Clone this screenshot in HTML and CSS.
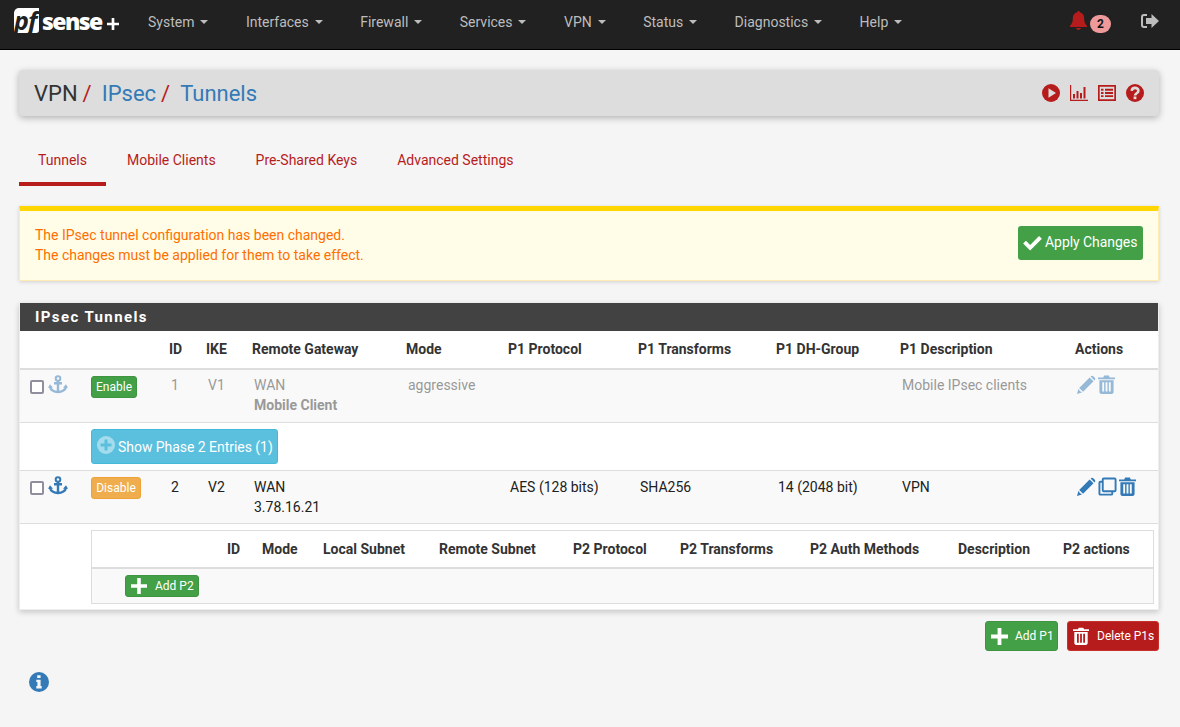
FILE: index.html
```html
<!DOCTYPE html>
<html lang="en">
<head>
<meta charset="utf-8">
<title>VPN / IPsec / Tunnels</title>
<link rel="stylesheet" href="styles.css">
</head>
<body>
<svg class="defs" width="0" height="0" aria-hidden="true">
  <symbol id="i-anchor" viewBox="0 0 20 20"><path fill="none" stroke="currentColor" stroke-width="2.400" d="M10 6v11M6 8.200h8M2 11.500c.5 3.500 4 5.500 8 5.500s7.500-2 8-5.500"/><circle cx="10" cy="3.500" r="2.300" fill="none" stroke="currentColor" stroke-width="2"/><path fill="currentColor" d="M0 12.800 2 9.300l3 3.500zM20 12.800l-2-3.500-3 3.500z"/></symbol>
  <symbol id="i-pencil" viewBox="0 0 20 20"><path fill="currentColor" d="M13.300 2.600 17.400 6.700 6.400 17.700 2.300 13.600zM14.400 1.500c1-1 2-1 3 0l1.100 1.100c1 1 1 2 0 3l-.1.100-4.100-4.100zM1.500 14.800l3.700 3.700-5.200 1.500z"/><path fill="#fff" opacity=".75" d="M2.800 15.200l2 2-1 .3-1.300-1.300z"/></symbol>
  <symbol id="i-trash" viewBox="0 0 18 20"><path fill="currentColor" d="M0 2.500h5.500L6.500.6h5l1 1.900H18v2H0zM1.500 5.500h15V18c0 1.200-.8 2-2 2h-11c-1.200 0-2-.8-2-2zM4.500 7.500V17.500h2V7.500zM8 7.500V17.500h2V7.500zM11.500 7.500V17.500h2V7.500z" fill-rule="evenodd"/></symbol>
  <symbol id="i-copy" viewBox="0 0 20 20"><path fill="none" stroke="currentColor" stroke-width="2" d="M6 1.500h11.500a1 1 0 0 1 1 1V14a1 1 0 0 1-1 1H6a1 1 0 0 1-1-1V2.500a1 1 0 0 1 1-1z"/><path fill="none" stroke="currentColor" stroke-width="2" d="M5 5H2.500a1 1 0 0 0-1 1v11.500a1 1 0 0 0 1 1H14a1 1 0 0 0 1-1V15"/></symbol>
  <symbol id="i-plus" viewBox="0 0 18 18"><path fill="currentColor" d="M7 0h4v7h7v4h-7v7H7v-7H0V7h7z"/></symbol>
</svg>

<header class="navbar">
  <a class="brand" href="#"><span class="pf">pf</span><span class="sense">sense</span><svg class="brand-plus"><use href="#i-plus"/></svg></a>
  <nav class="menu">
    <a class="menu-item" href="#">System<i class="caret"></i></a>
    <a class="menu-item" href="#">Interfaces<i class="caret"></i></a>
    <a class="menu-item" href="#">Firewall<i class="caret"></i></a>
    <a class="menu-item" href="#">Services<i class="caret"></i></a>
    <a class="menu-item" href="#">VPN<i class="caret"></i></a>
    <a class="menu-item" href="#">Status<i class="caret"></i></a>
    <a class="menu-item" href="#">Diagnostics<i class="caret"></i></a>
    <a class="menu-item" href="#">Help<i class="caret"></i></a>
  </nav>
  <div class="nav-right">
    <svg class="bell" viewBox="0 0 18 20"><path fill="currentColor" d="M9 0c.8 0 1.300.6 1.300 1.300 3 .6 4.700 3 4.700 6 0 4.500 1 6 3 8.200V17H0v-1.500c2-2.200 3-3.700 3-8.200 0-3 1.700-5.400 4.700-6C7.700.6 8.200 0 9 0zM6.500 18h5c0 1.200-1.100 2-2.500 2s-2.500-.8-2.500-2z"/></svg>
    <span class="badge">2</span>
    <svg class="signout" viewBox="0 0 18 16"><path fill="none" stroke="currentColor" stroke-width="2" d="M6 2H3a2 2 0 0 0-2 2v8a2 2 0 0 0 2 2h3"/><path fill="currentColor" d="M5 5h5.500V1l7.500 7-7.500 7v-4H5z"/></svg>
  </div>
</header>

<main class="page">
  <section class="crumbs">
    <h1 class="crumb-title">VPN<span class="sep">/</span><a href="#">IPsec</a><span class="sep">/</span><a href="#">Tunnels</a></h1>
    <div class="crumb-icons">
      <svg viewBox="0 0 18 18"><circle cx="9" cy="9" r="9" fill="currentColor"/><path fill="#ddd" d="M6.500 4.300v9.400l7.500-4.700z"/></svg>
      <svg viewBox="0 0 18 18"><path fill="currentColor" d="M0 1h1.200v14.800H18V17H0zM3 10h2v4.500H3zM6.500 7h2v7.500h-2zM10 9h2v5.500h-2zM13.500 3h2v11.500h-2z"/></svg>
      <svg viewBox="0 0 18 18"><path fill="none" stroke="currentColor" stroke-width="1.700" d="M.85 1.850h16.300v14.300H.85z"/><path fill="currentColor" d="M3 4.800h2.500v1.900H3zM7 4.800h8v1.900H7zM3 8h2.500v1.900H3zM7 8h8v1.900H7zM3 11.200h2.500v1.900H3zM7 11.200h8v1.900H7z"/></svg>
      <svg viewBox="0 0 18 18"><circle cx="9" cy="9" r="9" fill="currentColor"/><path fill="none" stroke="#ddd" stroke-width="2.600" d="M5.700 6.900c.2-2 1.500-3 3.300-3s3.400 1 3.400 2.800c0 2.600-3.400 2.400-3.400 4.900"/><path fill="#ddd" d="M7.600 12.500h2.800v2.700H7.600z"/></svg>
    </div>
  </section>

  <nav class="tabs">
    <a class="tab active" href="#">Tunnels</a>
    <a class="tab" href="#">Mobile Clients</a>
    <a class="tab" href="#">Pre-Shared Keys</a>
    <a class="tab" href="#">Advanced Settings</a>
  </nav>

  <section class="alert">
    <p class="alert-text">The IPsec tunnel configuration has been changed.<br>The changes must be applied for them to take effect.</p>
    <button class="btn btn-apply"><svg class="ic-check" viewBox="0 0 20 16"><path fill="currentColor" d="M7.500 15.500 0 8l3-3 4.500 4.500L17 0l3 3z"/></svg>Apply Changes</button>
  </section>

  <section class="panel">
    <h2 class="panel-title">IPsec Tunnels</h2>
    <table class="tunnels">
      <colgroup>
        <col class="c0"><col class="c1"><col class="c2"><col class="c3"><col class="c4"><col class="c5"><col class="c6"><col class="c7"><col class="c8"><col class="c9"><col class="c10">
      </colgroup>
      <thead>
        <tr><th></th><th></th><th>ID</th><th>IKE</th><th>Remote Gateway</th><th>Mode</th><th>P1 Protocol</th><th>P1 Transforms</th><th>P1 DH-Group</th><th>P1 Description</th><th>Actions</th></tr>
      </thead>
      <tbody>
        <tr class="row muted">
          <td class="cell-check"><div class="check-wrap"><input type="checkbox" class="check"><svg class="anchor"><use href="#i-anchor"/></svg></div></td>
          <td class="cell-btn"><button class="btn btn-xs btn-green">Enable</button></td>
          <td>1</td><td>V1</td><td>WAN<br><b>Mobile Client</b></td><td>aggressive</td><td></td><td></td><td></td><td>Mobile IPsec clients</td>
          <td class="cell-actions"><svg class="act"><use href="#i-pencil"/></svg><svg class="act trash"><use href="#i-trash"/></svg></td>
        </tr>
        <tr class="row-phase">
          <td></td>
          <td colspan="10" class="cell-phase"><button class="btn btn-info"><span class="plus-circle"><svg viewBox="0 0 18 18"><path fill="#5bc0de" d="M7.500 3.500h3v4h4v3h-4v4h-3v-4h-4v-3h4z"/></svg></span>Show Phase 2 Entries (1)</button></td>
        </tr>
        <tr class="row">
          <td class="cell-check"><div class="check-wrap"><input type="checkbox" class="check"><svg class="anchor"><use href="#i-anchor"/></svg></div></td>
          <td class="cell-btn"><button class="btn btn-xs btn-orange">Disable</button></td>
          <td>2</td><td>V2</td><td>WAN<br>3.78.16.21</td><td></td><td>AES (128 bits)</td><td>SHA256</td><td>14 (2048 bit)</td><td>VPN</td>
          <td class="cell-actions"><svg class="act"><use href="#i-pencil"/></svg><svg class="act"><use href="#i-copy"/></svg><svg class="act trash"><use href="#i-trash"/></svg></td>
        </tr>
        <tr class="row-nested">
          <td></td>
          <td colspan="10" class="cell-nested">
            <table class="phase2">
              <colgroup>
                <col class="n0"><col class="n1"><col class="n2"><col class="n3"><col class="n4"><col class="n5"><col class="n6"><col class="n7"><col class="n8"><col class="n9">
              </colgroup>
              <thead>
                <tr><th></th><th>ID</th><th>Mode</th><th>Local Subnet</th><th>Remote Subnet</th><th>P2 Protocol</th><th>P2 Transforms</th><th>P2 Auth Methods</th><th>Description</th><th>P2 actions</th></tr>
              </thead>
              <tbody>
                <tr><td colspan="10" class="cell-add"><button class="btn btn-xs btn-green btn-add"><svg class="ic-plus"><use href="#i-plus"/></svg>Add P2</button></td></tr>
              </tbody>
            </table>
          </td>
        </tr>
      </tbody>
    </table>
  </section>

  <div class="actions">
    <button class="btn btn-sm btn-green"><svg class="ic-plus-lg"><use href="#i-plus"/></svg>Add P1</button>
    <button class="btn btn-sm btn-red"><svg class="ic-trash-lg"><use href="#i-trash"/></svg>Delete P1s</button>
  </div>

  <svg class="info" viewBox="0 0 20 20"><circle cx="10" cy="10" r="10" fill="currentColor"/><path fill="#f5f5f5" d="M8.200 3.300h3.400v2.700H8.200zM7.300 7.800h4.300v6.300h1.100v2.300H7.300v-2.300h1.100v-4H7.300z"/></svg>
</main>
</body>
</html>
```
FILE: styles.css
```css
* { box-sizing: border-box; }

html, body { margin: 0; padding: 0; }

body {
  height: 727px;
  overflow: hidden;
  background: #f5f5f5;
  color: #212121;
  font-family: Roboto, "Liberation Sans", sans-serif;
  font-size: 14px;
  line-height: 20px;
}

a { text-decoration: none; color: inherit; }

.defs { display: block; height: 0; }

/* Navbar */
.navbar {
  display: flex;
  align-items: center;
  height: 50px;
  padding: 0 0 5px 14px;
  background: #212121;
  border-bottom: 1px solid #000;
}

.brand { display: flex; align-items: center; width: 134px; height: 44px; color: #fff; }

.pf {
  width: 25px;
  height: 25px;
  margin-top: -3px;
  padding-right: 3px;
  background: #fff;
  color: #212121;
  font: italic 700 25px/24px "Open Sans", sans-serif;
  letter-spacing: -1px;
  text-align: center;
  border-radius: 5px 0 3px 3px;
}

.sense {
  margin-left: 3px;
  margin-top: -2px;
  font: 800 23px/25px "Open Sans", sans-serif;
  letter-spacing: -1.600px;
}

.brand-plus {
  width: 12px;
  height: 12px;
  margin-left: 5px;
  margin-top: 3px;
}

.menu { display: flex; }

.menu-item {
  display: flex;
  align-items: center;
  margin-right: 37.650px;
  color: #bdbdbd;
  font-size: 14px;
}

.caret {
  width: 0;
  height: 0;
  margin-left: 5.800px;
  border-top: 4px solid #bdbdbd;
  border-left: 4px solid transparent;
  border-right: 4px solid transparent;
}

.nav-right {
  display: flex;
  align-items: center;
  margin-left: auto;
}

.bell { width: 17px; height: 19px; margin-top: -4px; color: #b71c1c; }

.badge {
  width: 21px;
  height: 18px;
  margin: 4px 0 0 3px;
  background: #ef9a9a;
  color: #111;
  border-radius: 9px;
  font-size: 12px;
  font-weight: 700;
  line-height: 18px;
  text-align: center;
}

.signout { width: 18px; height: 16px; margin: -3px 21px 0 30px; color: #bdbdbd; }

/* Page */
.page { padding: 20px 21px 0 19px; }

.crumbs {
  display: flex;
  align-items: center;
  justify-content: space-between;
  height: 46px;
  padding: 0 15px;
  background: #ddd;
  border-radius: 4px;
  box-shadow: 0 2px 7px rgba(0, 0, 0, .28);
}

.crumb-title {
  margin: 0;
  padding-top: 2px;
  color: #333;
  font-size: 22px;
  font-weight: 400;
  line-height: 44px;
}

.crumb-title a { color: #337ab7; }

.sep { margin: 0 10px 0 5px; color: #b71c1c; }

.crumb-icons { display: flex; gap: 10px; color: #b71c1c; }

.crumb-icons svg { display: block; width: 18px; height: 18px; }

/* Tabs */
.tabs { display: flex; gap: 2px; margin-top: 24px; }

.tab {
  height: 46px;
  padding: 10px 19px 0;
  color: #b71c1c;
  border-bottom: 4px solid transparent;
}

.tab.active { border-bottom-color: #b71c1c; }

/* Alert */
.alert {
  display: flex;
  align-items: flex-start;
  justify-content: space-between;
  height: 75px;
  margin-top: 20px;
  padding: 14px 15px 0;
  background: #fffde7;
  border: 1px solid #ffecb3;
  border-top: 5px solid #ffd600;
  box-shadow: 0 1px 4px rgba(0, 0, 0, .15);
  color: #ff6f00;
}

.alert-text { margin: 0; }

/* Buttons */
.btn {
  display: inline-flex;
  align-items: center;
  border: 1px solid transparent;
  border-radius: 3px;
  color: #fff;
  font-family: inherit;
  padding: 0;
}

.btn-apply {
  width: 125px;
  height: 34px;
  margin-top: 1px;
  padding: 0 0 2px 4px;
  background: #43a047;
  font-size: 14px;
  letter-spacing: -.05px;
}

.ic-check { width: 19px; height: 15px; margin: 2px 3px 0 0; }

.btn-xs { height: 22px; font-size: 12px; justify-content: center; }

.btn-green { background: #43a047; border-color: #3d9441; }

.btn-orange { background: #f0ad4e; border-color: #eea236; }

.btn-red { background: #b71c1c; border-color: #c9302c; }

.btn-info {
  width: 187px;
  height: 35px;
  padding-left: 5px;
  background: #5bc0de;
  border-color: #46b8da;
  font-size: 14px;
  letter-spacing: -.04px;
}

.plus-circle {
  display: block;
  width: 18px;
  height: 18px;
  margin: -4px 3px 0 0;
  background: rgba(255, 255, 255, .45);
  border-radius: 50%;
}

.plus-circle svg { display: block; width: 18px; height: 18px; }

/* Panel */
.panel {
  margin-top: 22px;
  background: #fff;
  border: 1px solid #eee;
  border-top: 0;
  box-shadow: 0 2px 6px rgba(0, 0, 0, .2);
}

.panel-title {
  height: 28px;
  margin: 0;
  padding-left: 15px;
  background: #424242;
  color: #fff;
  font-size: 15px;
  font-weight: 700;
  line-height: 28px;
  letter-spacing: 1.400px;
}

.tunnels, .phase2 {
  table-layout: fixed;
  border-collapse: separate;
  border-spacing: 0;
  width: 1138px;
}

.c0 { width: 63px; }
.c1 { width: 78px; }
.c2 { width: 37px; }
.c3 { width: 46px; }
.c4 { width: 154px; }
.c5 { width: 102px; }
.c6 { width: 130px; }
.c7 { width: 138px; }
.c8 { width: 124px; }
.c9 { width: 175px; }
.c10 { width: 91px; }

th {
  padding: 0 0 0 8px;
  color: #333;
  font-weight: 700;
  text-align: left;
  white-space: nowrap;
}

.tunnels > thead th {
  height: 39px;
  padding-bottom: 2px;
  border-bottom: 2px solid #ddd;
}

.row > td {
  height: 53px;
  padding: 6px 0 0 10px;
  vertical-align: top;
  background: #f9f9f9;
  border-bottom: 1px solid #ddd;
  white-space: nowrap;
}

.row.muted > td { padding-top: 5px; color: #999; }

.row > .cell-check,
.row.muted > .cell-check { padding: 8px 0 0 10px; }

.check-wrap { display: flex; align-items: center; }

.check {
  appearance: none;
  display: block;
  width: 14px;
  height: 14px;
  margin: 0;
  background: #fff;
  border: 2px solid #8f8f9d;
  border-radius: 2px;
}

.anchor { width: 20px; height: 20px; margin: -3px 0 0 4px; color: #337ab7; }

.muted .anchor, .muted .act { opacity: .5; }

.row > .cell-btn,
.row.muted > .cell-btn { padding: 6px 0 0 8px; }

.cell-btn .btn-green { width: 46px; }

.cell-btn .btn-orange { width: 50px; }

.row > .cell-actions { padding: 6px 0 0 10px; color: #337ab7; }

.row.muted > .cell-actions { padding: 5px 0 0 10px; color: #337ab7; }

.act { display: inline-block; width: 19px; height: 19px; vertical-align: top; margin-right: 2px; }

.act.trash { width: 17px; }

.row-phase > td { height: 48px; border-bottom: 1px solid #ddd; }

.cell-phase { padding: 6px 0 0 8px; vertical-align: top; }

.row-nested > td { height: 85px; }

.cell-nested { padding: 6px 4px 5px 8px; vertical-align: top; }

.phase2 {
  width: 1063px;
  border: 1px solid #ddd;
}

.n0 { width: 127px; }
.n1 { width: 35px; }
.n2 { width: 61px; }
.n3 { width: 116px; }
.n4 { width: 134px; }
.n5 { width: 107px; }
.n6 { width: 130px; }
.n7 { width: 148px; }
.n8 { width: 105px; }
.n9 { width: 98px; }

.phase2 th { height: 38px; border-bottom: 2px solid #ddd; }

.cell-add {
  height: 34px;
  padding: 6px 0 0 33px;
  background: #f9f9f9;
  vertical-align: top;
}

.btn-add { width: 74px; justify-content: flex-start; padding-left: 5px; font-size: 12px; }

.ic-plus { width: 16px; height: 16px; margin-right: 8px; }

/* Bottom actions */
.actions {
  display: flex;
  justify-content: flex-end;
  gap: 9px;
  margin-top: 11px;
}

.btn-sm { height: 30px; font-size: 12px; padding-left: 5px; }

.btn-sm.btn-green { width: 73px; }

.btn-sm.btn-red { width: 92px; }

.ic-plus-lg { width: 17px; height: 17px; margin-right: 7px; }

.ic-trash-lg { width: 16px; height: 20px; margin-right: 8px; }

.info { display: block; width: 20px; height: 20px; margin: 21px 0 0 10px; color: #337ab7; }
```
